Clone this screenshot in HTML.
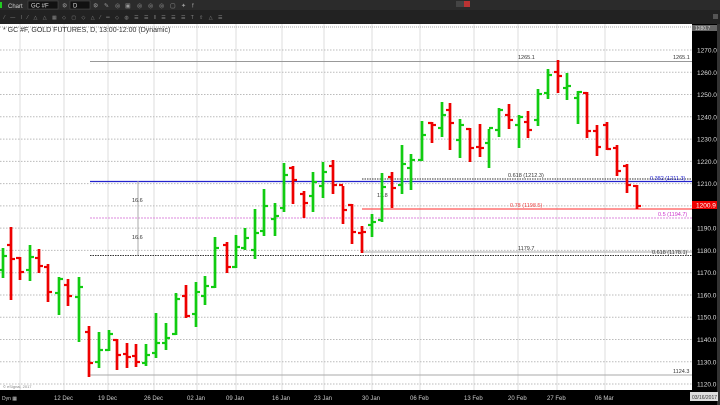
<!DOCTYPE html>
<html><head><meta charset="utf-8"><style>
body{margin:0;width:720px;height:405px;overflow:hidden;background:#fff;font-family:"Liberation Sans",sans-serif}
svg{display:block}
</style></head><body>
<svg id="s" width="720" height="405" xmlns="http://www.w3.org/2000/svg" font-family="Liberation Sans, sans-serif">
<rect x="0" y="0" width="720" height="10" fill="#2b2b2b"/>
<rect x="0" y="10" width="720" height="14" fill="#222"/>
<rect x="0" y="2" width="2" height="6" fill="#2c2"/>
<text x="8" y="8" font-size="6" fill="#ccc">Chart</text>
<rect x="28" y="1" width="30" height="8" fill="#111" stroke="#555" stroke-width="0.5"/>
<text x="31" y="7.5" font-size="6" fill="#ddd">GC #F</text>
<rect x="70" y="1" width="20" height="8" fill="#111" stroke="#555" stroke-width="0.5"/>
<text x="73" y="7.5" font-size="6" fill="#ddd">D</text>
<g fill="#999" font-size="6"><text x="62" y="7.5">⚙</text><text x="93" y="7.5">⚙</text><text x="104" y="7.5">✎</text><text x="115" y="7.5">◎</text><text x="125" y="7.5">▣</text><text x="137" y="7.5">◎</text><text x="148" y="7.5">◎</text><text x="159" y="7.5">◎</text><text x="170" y="7.5">▢</text><text x="181" y="7.5">✦</text><text x="192" y="7.5">f</text></g>
<text x="4" y="19" font-size="5" fill="#888" letter-spacing="2">⁄ — ǀ ⁄ △ △ ▦ ◇ ▢ ◇ △ ⁄ ═ ◇ ◍ ☰ ☰ ǁ ☰ ☰ ☰ T ⇧ △ ☰</text>
<rect x="456" y="1" width="14" height="6" fill="#444"/><rect x="464" y="1" width="6" height="6" fill="#b33"/>
<rect x="713" y="14" width="5" height="5" fill="#555"/>
<rect x="692" y="24" width="28" height="381" fill="#000"/>
<rect x="0" y="390" width="720" height="15" fill="#000"/>
<rect x="717" y="24" width="3" height="381" fill="#333"/>
<g id="grid"></g>
<text x="3" y="32" font-size="7" fill="#333">* GC #F, GOLD FUTURES, D, 13:00-12:00 (Dynamic)</text>
<g id="lines"></g>
<g id="bars"></g>
<text x="3" y="388" font-size="4" fill="#888">© eSignal, 2017</text>
<text x="2" y="400" font-size="5" fill="#ccc">Dyn ▦</text>
<rect x="690" y="392" width="28" height="9" fill="#ddd"/>
<text x="692" y="399" font-size="5" fill="#333">03/16/2017</text>
</svg>
<script>
var ns="http://www.w3.org/2000/svg";
function el(p,t,a,txt){var e=document.createElementNS(ns,t);for(var k in a)e.setAttribute(k,a[k]);if(txt)e.textContent=txt;document.getElementById(p).appendChild(e);}
function Y(p){return 50+(1270-p)*2.227;}
var dx=[64,108,154,197,236,282,324,372,420,474,518,557,605],dl=["12 Dec","19 Dec","26 Dec","02 Jan","09 Jan","16 Jan","23 Jan","30 Jan","06 Feb","13 Feb","20 Feb","27 Feb","06 Mar"];
dx.forEach(function(x,i){el("grid","line",{x1:x,y1:24,x2:x,y2:390,stroke:"#ddd","stroke-width":1});el("grid","text",{x:x-10,y:400,"font-size":6,fill:"#ccc"},dl[i]);});
el("grid","line",{x1:20,y1:24,x2:20,y2:390,stroke:"#ddd"});
el("grid","line",{x1:0,y1:27,x2:692,y2:27,stroke:"#aaa","stroke-dasharray":"1,1"});
for(var p=1120;p<=1270;p+=10){var y=Y(p);el("grid","line",{x1:0,y1:y,x2:692,y2:y,stroke:"#bbb","stroke-dasharray":"1.5,1.5"});el("grid","text",{x:697,y:y+2.5,"font-size":6.5,fill:"#ddd"},p.toFixed(1));}
function L(x1,y,x2,c,w,d){var a={x1:x1,y1:y,x2:x2,y2:y,stroke:c,"stroke-width":w||1};if(d)a["stroke-dasharray"]=d;el("lines","line",a);}
function T(x,y,t,c){el("lines","text",{x:x,y:y,"font-size":5.5,fill:c||"#333"},t);}
L(90,61.5,692,"#999",1);T(518,59,"1265.1");T(673,59,"1265.1");
L(362,179,692,"#333",1,"1.5,1");T(508,177,"0.618 (1212.3)");
L(90,181.5,692,"#22c",1.3);T(650,180,"0.382 (1211.3)","#22c");
L(362,209,692,"#f55",1.2);T(510,207,"0.78 (1198.5)","#e44");
L(90,218,692,"#d8d",1,"2,1");T(658,216,"0.5 (1194.7)","#c3c");
L(362,252,692,"#aaa",1);T(518,250,"1179.7");
L(90,255.5,692,"#333",1,"1.5,1");T(652,254,"0.618 (1178.1)");
L(90,375,692,"#aaa",1);T(673,373,"1124.3");
el("lines","line",{x1:138,y1:181,x2:138,y2:255,stroke:"#aaa"});
T(132,202,"16.6");T(132,239,"16.6");T(377,197,"13.8");
el("lines","rect",{x:692,y:201,width:25,height:8,fill:"#e00"});
el("lines","text",{x:696,y:207.5,"font-size":6.5,fill:"#fff"},"1200.9");
el("lines","rect",{x:692,y:25,width:25,height:6,fill:"#666"});
el("lines","text",{x:695,y:30,"font-size":5,fill:"#ddd"},"1280.7");
var B=[
[3,'g',248,278,270,256],[11,'r',227,300,245,259],[20,'r',257,280,258,272],[30,'g',245,281,270,257],[39,'r',249,273,258,266],[48,'r',264,302,267,292],[59,'g',277,315,293,279],[68,'r',279,306,285,296],[79,'g',277,342,297,287],[89,'r',326,377,332,363],[99,'g',332,368,362,350],[109,'g',330,351,350,334],[117,'r',339,370,340,355],[127,'r',343,368,354,357],[136,'r',344,367,356,362],[146,'g',344,366,363,355],[156,'g',313,358,353,343],[166,'g',323,350,343,338],[176,'g',293,335,334,299],[186,'r',285,318,296,316],[196,'g',282,327,314,292],[205,'g',276,305,296,286],[215,'g',237,288,287,248],[227,'r',242,273,245,267],[236,'g',235,268,267,247],[245,'g',228,250,248,238],[255,'g',209,259,250,233],[264,'g',189,236,231,206],[275,'g',203,236,219,216],[284,'g',163,212,208,175],[293,'r',166,204,168,180],
[304,'r',191,218,194,203],[313,'g',172,212,196,182],[323,'g',162,198,186,172],[333,'r',160,194,166,185],[343,'r',186,224,185,210],[352,'r',204,244,205,232],[362,'r',226,253,233,232],[372,'g',214,237,225,222],[382,'g',173,222,220,187],[392,'r',172,208,177,188],[402,'g',145,194,185,164],[411,'g',154,190,168,160],[422,'g',121,161,160,135],[432,'r',122,143,123,125],[442,'g',102,137,128,115],[450,'r',103,150,110,123],[460,'g',119,158,140,125],[470,'r',128,162,129,148],[480,'r',124,157,147,148],[489,'g',129,168,143,128],[499,'g',108,137,130,110],[509,'r',104,129,115,120],[519,'g',115,148,125,117],[528,'r',111,138,122,130],[538,'g',89,126,120,94],[548,'g',69,99,93,75],[558,'r',60,93,72,76],[567,'g',73,100,88,86],[578,'g',91,124,98,92],[587,'r',92,138,93,131],[597,'r',125,156,131,147],[607,'r',122,150,125,149],[617,'r',145,176,148,171],[627,'r',164,193,166,185],[637,'r',185,209,186,206]];
B.forEach(function(b){var c=b[1]=='g'?"#1c1":"#e00";el("bars","line",{x1:b[0],y1:b[2],x2:b[0],y2:b[3],stroke:c,"stroke-width":2.7});el("bars","line",{x1:b[0]-4,y1:b[4],x2:b[0],y2:b[4],stroke:c,"stroke-width":2.2});el("bars","line",{x1:b[0],y1:b[5],x2:b[0]+4,y2:b[5],stroke:c,"stroke-width":2.2});});
</script>
</body></html>
